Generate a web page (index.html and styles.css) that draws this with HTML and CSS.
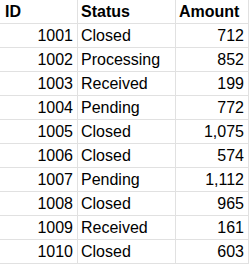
FILE: index.html
```html
<!DOCTYPE html>
<html lang="en">
<head>
  <meta charset="UTF-8">
  <title>Orders</title>
  <link rel="stylesheet" href="styles.css">
</head>
<body>
<table class="sheet">
  <thead>
    <tr>
      <th class="col-id">ID</th>
      <th class="col-status">Status</th>
      <th class="col-amount">Amount</th>
    </tr>
  </thead>
  <tbody>
    <tr><td class="num">1001</td><td>Closed</td><td class="num">712</td></tr>
    <tr><td class="num">1002</td><td>Processing</td><td class="num">852</td></tr>
    <tr><td class="num">1003</td><td>Received</td><td class="num">199</td></tr>
    <tr><td class="num">1004</td><td>Pending</td><td class="num">772</td></tr>
    <tr><td class="num">1005</td><td>Closed</td><td class="num">1,075</td></tr>
    <tr><td class="num">1006</td><td>Closed</td><td class="num">574</td></tr>
    <tr><td class="num">1007</td><td>Pending</td><td class="num">1,112</td></tr>
    <tr><td class="num">1008</td><td>Closed</td><td class="num">965</td></tr>
    <tr><td class="num">1009</td><td>Received</td><td class="num">161</td></tr>
    <tr><td class="num">1010</td><td>Closed</td><td class="num">603</td></tr>
  </tbody>
</table>
</body>
</html>
```
FILE: styles.css
```css
body {
    margin: 0;
    background: #fff;
}

.sheet {
    border-collapse: separate;
    border-spacing: 0;
    table-layout: fixed;
    font-family: "Liberation Sans", Arial, sans-serif;
    font-size: 16px;
    color: #000;
}

.sheet th,
.sheet td {
    box-sizing: border-box;
    height: 24px;
    padding: 1px 4px 0 3px;
    border-right: 1px solid #e1e1e1;
    border-bottom: 1px solid #e1e1e1;
    text-align: left;
    white-space: nowrap;
    line-height: 22px;
}

.sheet th {
    font-weight: bold;
}

.col-id {
    width: 78px;
}

.sheet th.col-id {
    padding-left: 5px;
}

.col-status {
    width: 98px;
}

.col-amount {
    width: 73px;
}

.sheet td.num {
    text-align: right;
}
```
